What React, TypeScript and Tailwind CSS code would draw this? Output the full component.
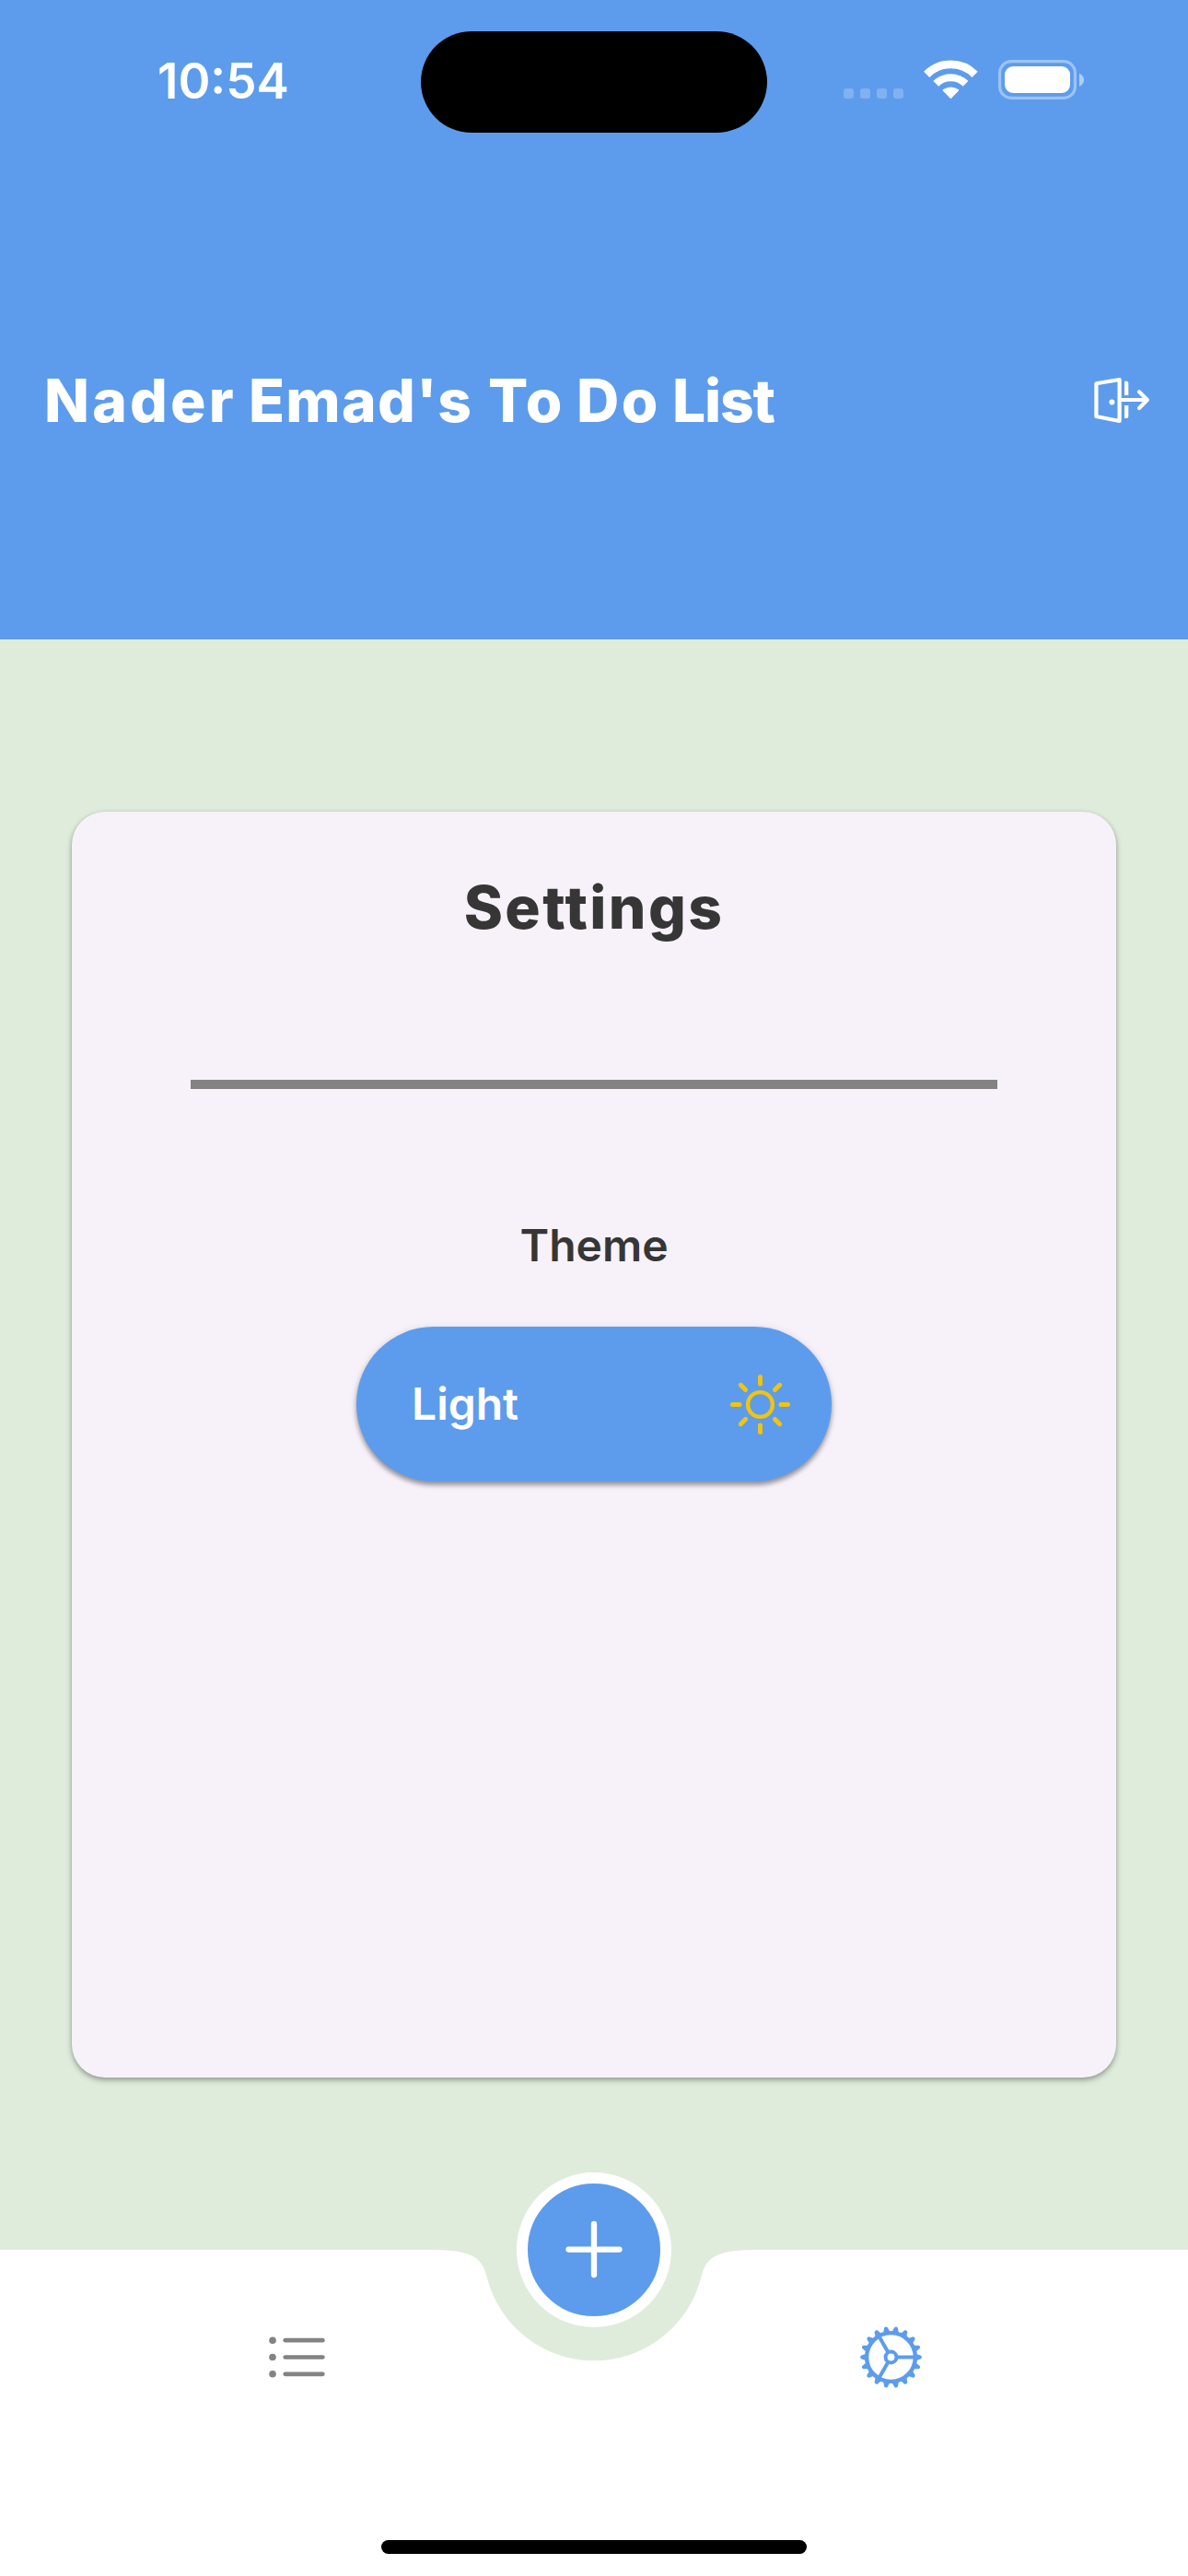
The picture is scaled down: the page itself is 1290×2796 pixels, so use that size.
const TEETH = Array.from({ length: 18 }, (_, i) => i * 20);
const RAYS = Array.from({ length: 8 }, (_, i) => i * 45);

function StatusBar() {
  return (
    <div className="relative flex h-[180px] justify-between">
      <div className="mt-[56px] ml-[171px] text-[53px] leading-[64px] font-semibold">10:54</div>
      <div className="absolute top-[34px] left-[457px] h-[110px] w-[376px] rounded-full bg-black" />
      <svg className="mt-[40px] mr-[80px] h-[100px] w-[330px]" viewBox="0 0 330 100" fill="none">
        <g fill="#fff" fillOpacity=".22">
          <rect x="36" y="56" width="11" height="11" rx="3" />
          <rect x="54" y="56" width="11" height="11" rx="3" />
          <rect x="72" y="56" width="11" height="11" rx="3" />
          <rect x="90" y="56" width="11" height="11" rx="3" />
        </g>
        <path d="M126.2 40.8a37 37 0 0 1 52.4 0" stroke="#fff" strokeWidth="8.8" />
        <path d="M136.3 50.9a22.8 22.8 0 0 1 32.2 0" stroke="#fff" strokeWidth="8.2" />
        <path d="M152.4 67.3l-8.6-8.8q-.6-.8.4-1.4a14.5 14.5 0 0 1 16.4 0q1 .6.4 1.4z" fill="#fff" />
        <rect x="205.6" y="26.6" width="81.8" height="39.8" rx="12.5" stroke="#fff" strokeOpacity=".4" strokeWidth="3.2" />
        <rect x="211" y="32" width="71" height="29" rx="9" fill="#fff" />
        <path d="M292 39.7c6.7 2.5 6.7 11.5 0 14z" fill="#fff" fillOpacity=".5" />
      </svg>
    </div>
  );
}

function ExitIcon() {
  return (
    <svg className="h-[60px] w-[64px]" viewBox="16 14 64 60" fill="none" stroke="#fff" strokeWidth="4.2">
      <path d="M20.4 26.2L45.6 22v45L20.4 62z" strokeLinejoin="round" />
      <circle cx="37.4" cy="46.4" r="3" fill="#fff" stroke="none" />
      <path d="M46 44h29M67 35.3l8.8 8.7-8.8 8.9" strokeLinecap="round" strokeLinejoin="round" />
      <path d="M51 23.7h2.3q2 0 2 2V39H51zM51 50h4.3v12q0 2-2 2H51z" fill="#fff" stroke="none" />
    </svg>
  );
}

function SunIcon() {
  return (
    <svg className="size-[75px]" viewBox="-37.5 -37.5 75 75" fill="none" stroke="#f1c40f">
      <circle r="13.4" strokeWidth="4.4" />
      {RAYS.map((angle) => (
        <path key={angle} d="M22.5 0H30" strokeWidth="5" strokeLinecap="round" transform={`rotate(${angle})`} />
      ))}
    </svg>
  );
}

function ListIcon() {
  return (
    <svg className="size-[75px]" viewBox="0 0 75 75" fill="#838383">
      {[19.2, 37.5, 55.8].map((y) => (
        <g key={y}>
          <circle cx="11" cy={y} r="3.8" />
          <rect x="22.4" y={y - 2.35} width="45.3" height="4.7" rx="2.35" />
        </g>
      ))}
    </svg>
  );
}

function GearIcon() {
  return (
    <svg className="size-[75px]" viewBox="-37.5 -37.5 75 75" fill="none" stroke="#5d9cec" strokeWidth="4.4">
      <circle r="26.4" />
      <circle r="5.9" strokeWidth="4" />
      {[0, 120, 240].map((angle) => (
        <path key={angle} d="M7 0H26" strokeWidth="4" transform={`rotate(${angle})`} />
      ))}
      {TEETH.map((angle) => (
        <path
          key={angle}
          d="M27 -3.8L32.6 -1.8Q34.4 0 32.6 1.8L27 3.8Z"
          fill="#5d9cec"
          stroke="none"
          transform={`rotate(${angle})`}
        />
      ))}
    </svg>
  );
}

function Header() {
  return (
    <header className="h-[694px] bg-[#5d9cec] text-white">
      <StatusBar />
      <div className="flex h-[510px] items-center justify-between pr-[40px] pl-[48px]">
        <h1 className="text-[64px] leading-[80px] font-extrabold whitespace-nowrap">
          <span className="inline-block w-[222px] tracking-[3.2px]">Nader </span>
          <span className="inline-block w-[260px] tracking-[1.3px]">Emad's </span>
          <span className="inline-block w-[96px] tracking-[2.5px]">To </span>
          <span className="inline-block w-[104px] tracking-[2.5px]">Do </span>
          <span className="inline-block tracking-[-1.2px]">List</span>
        </h1>
        <div className="pb-[2px]">
          <ExitIcon />
        </div>
      </div>
    </header>
  );
}

function SettingsCard() {
  return (
    <section className="flex h-[1374px] w-[1134px] flex-col items-center rounded-[36px] bg-[#f7f2fa] shadow-[0_3px_6px_rgba(0,0,0,0.3),0_1px_4px_rgba(0,0,0,0.1)]">
      <h2 className="mt-[64px] text-[64px] leading-[80px] font-extrabold tracking-[2.4px]">Settings</h2>
      <div className="mt-[147px] h-[10px] w-[876px] bg-[#848384]" />
      <p className="mt-[140px] text-[48px] leading-[60px] font-semibold">Theme</p>
      <button className="mt-[58px] flex h-[168px] w-[516px] items-center justify-between rounded-full bg-[#5d9cec] pr-[40px] pl-[60px] text-white shadow-[0_4px_5px_rgba(0,0,0,0.34),0_1px_8px_rgba(0,0,0,0.12)]">
        <span className="text-[48px] leading-[60px] font-semibold">Light</span>
        <SunIcon />
      </button>
    </section>
  );
}

function BottomBar() {
  return (
    <nav className="relative h-[354px]">
      <svg className="absolute inset-0 h-[354px] w-[1290px]" viewBox="0 0 1290 354">
        <path d="M0 0H475C515 1 524 10 529 31A120 120 0 0 0 761 31C766 10 775 1 815 0H1290V354H0Z" fill="#fff" />
      </svg>
      <button className="absolute top-[-84px] left-[561px] flex size-[168px] items-center justify-center rounded-full border-[12px] border-white bg-[#5d9cec]">
        <svg className="size-[100px]" viewBox="0 0 100 100" stroke="#fff" strokeWidth="6.3" strokeLinecap="round">
          <path d="M22.5 49.6H77.5M50 22V77" />
        </svg>
      </button>
      <div className="relative flex h-[233px] items-center justify-around">
        <ListIcon />
        <GearIcon />
      </div>
      <div className="relative mx-auto mt-[82px] h-[15px] w-[462px] rounded-full bg-black" />
    </nav>
  );
}

export default function App() {
  return (
    <div className="flex h-[2796px] w-[1290px] flex-col overflow-hidden bg-[#dfecdb] font-[Inter,sans-serif] text-[#363636]">
      <Header />
      <main className="flex h-[1748px] justify-center pt-[187px]">
        <SettingsCard />
      </main>
      <BottomBar />
    </div>
  );
}
